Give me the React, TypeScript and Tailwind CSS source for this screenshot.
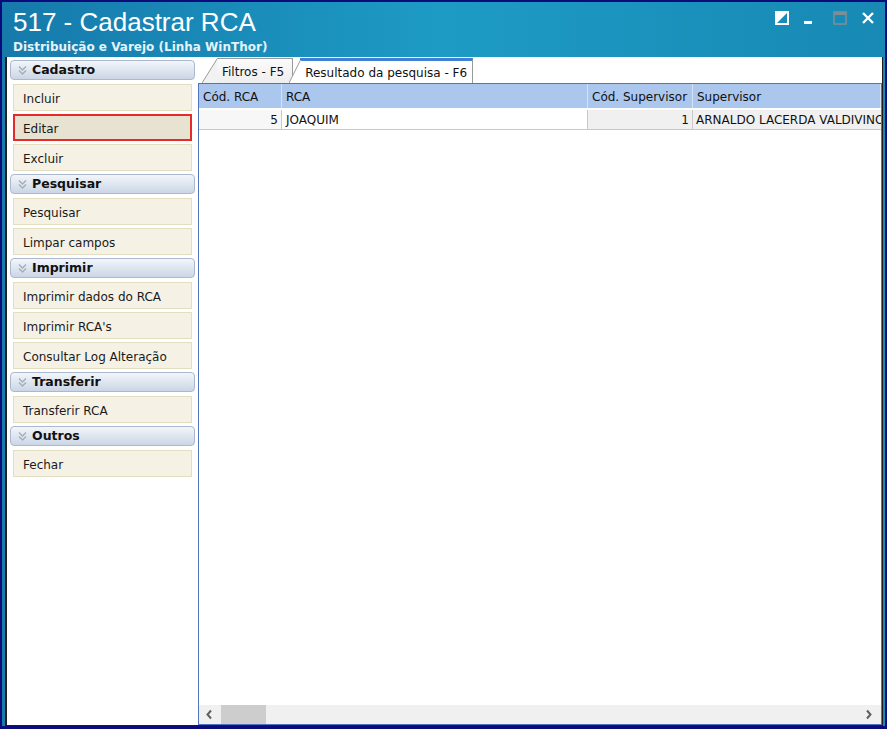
import type { ReactNode } from "react";

const uiFont = "font-['DejaVu_Sans',Verdana,sans-serif]";

type SideGroup = { title: string; items: string[] };

const groups: SideGroup[] = [
  { title: "Cadastro", items: ["Incluir", "Editar", "Excluir"] },
  { title: "Pesquisar", items: ["Pesquisar", "Limpar campos"] },
  { title: "Imprimir", items: ["Imprimir dados do RCA", "Imprimir RCA's", "Consultar Log Alteração"] },
  { title: "Transferir", items: ["Transferir RCA"] },
  { title: "Outros", items: ["Fechar"] },
];

function DoubleChevron() {
  return (
    <svg width="11" height="11" viewBox="0 0 11 11" className="shrink-0" aria-hidden>
      <path d="M2 1.5 L5.5 5 L9 1.5 M2 5.5 L5.5 9 L9 5.5" fill="none" stroke="#a3acbb" strokeWidth="1.3" />
    </svg>
  );
}

function GroupHeader({ title }: { title: string }) {
  return (
    <div className="flex h-[20px] w-[185px] items-center gap-[4px] rounded-[4px] border border-[#aab9cf] bg-gradient-to-b from-[#f3f6fa] to-[#cbd6e5] pl-[6px]">
      <DoubleChevron />
      <span className="pt-[1px] text-[12.5px] font-bold text-[#111]">{title}</span>
    </div>
  );
}

function SideButton({ label, selected }: { label: string; selected?: boolean }) {
  const tone = selected
    ? "border-2 border-[#e52a2a] bg-[#e7e3d0] pl-[8px]"
    : "border border-[#e3ddc2] bg-[#f5f2e5] pl-[9px]";
  return (
    <div className={`ml-[3px] flex h-[27px] w-[179px] items-center pt-[2px] text-[12px] text-[#1a1a1a] ${tone}`}>
      {label}
    </div>
  );
}

function Sidebar() {
  return (
    <aside className="flex w-[191px] shrink-0 flex-col pl-[3px] pt-[3px]">
      {groups.map((g) => (
        <div key={g.title} className="mb-[3px] flex flex-col">
          <GroupHeader title={g.title} />
          <div className="mt-[4px] flex flex-col gap-[3px]">
            {g.items.map((it) => (
              <SideButton key={it} label={it} selected={it === "Editar"} />
            ))}
          </div>
        </div>
      ))}
    </aside>
  );
}

function Tab({ children, active, slant }: { children: ReactNode; active?: boolean; slant: number }) {
  const fill = active ? "#ffffff" : "#f2f2f2";
  return (
    <div className={`flex h-[25px] items-end ${active ? "z-10 -ml-[4px]" : ""}`}>
      <svg width={slant} height="25" viewBox={`0 0 ${slant} 25`} className="shrink-0" aria-hidden>
        <polygon points={`0,25 ${slant},1 ${slant},25`} fill={fill} />
        <line x1="0" y1="25" x2={slant} y2="1" stroke="#9a9a9a" strokeWidth="1" />
        {active && <line x1={slant - 1} y1="1" x2={slant} y2="1" stroke="#3a78d4" strokeWidth="2" />}
      </svg>
      <div
        className={`flex h-[25px] items-center border-r border-[#9a9a9a] pt-[2px] text-[12px] text-[#111] ${
          active
            ? "border-t-[3px] border-t-[#3f7fd6] bg-white pl-[4px] pr-[5px]"
            : "border-t border-t-[#9a9a9a] bg-gradient-to-b from-[#fbfbfb] to-[#eeeeee] pl-[5px] pr-[8px]"
        }`}
      >
        {children}
      </div>
    </div>
  );
}

const cols = [
  { label: "Cód. RCA", w: "w-[83px]" },
  { label: "RCA", w: "w-[306px]" },
  { label: "Cód. Supervisor", w: "w-[105px]" },
  { label: "Supervisor", w: "flex-1" },
];

function Grid() {
  return (
    <div className="flex min-h-0 flex-1 flex-col border border-[#5273bd] bg-white">
      <div className="flex h-[24px] shrink-0 bg-[#abc7ee] text-[12px] text-[#111]">
        {cols.map((c) => (
          <div key={c.label} className={`${c.w} flex items-center overflow-hidden whitespace-nowrap border-r border-[#d5e2f6] pl-[4px] pt-[2px]`}>
            {c.label}
          </div>
        ))}
      </div>
      <div className="flex h-[22px] shrink-0 border-b border-[#c9c9c9] pt-[2px] text-[12px] text-[#111]">
        <div className="flex w-[83px] items-center justify-end border-r border-[#c9c9c9] bg-[#f7f7f7] pr-[3px]">5</div>
        <div className="flex w-[306px] items-center border-r border-[#c9c9c9] pl-[4px]">JOAQUIM</div>
        <div className="flex w-[105px] items-center justify-end border-r border-[#c9c9c9] bg-[#f0f0f0] pr-[3px]">1</div>
        <div className="flex flex-1 items-center overflow-hidden whitespace-nowrap bg-[#f0f0f0] pl-[3px]">
          ARNALDO LACERDA VALDIVINO
        </div>
      </div>
      <div className="flex-1" />
      <div className="flex h-[19px] shrink-0 items-center bg-[#f0f0f0]">
        <svg width="22" height="19" viewBox="0 0 22 19" className="shrink-0" aria-hidden>
          <path d="M12 5.5 L8.5 9.5 L12 13.5" fill="none" stroke="#606060" strokeWidth="2" />
        </svg>
        <div className="h-[19px] w-[45px] bg-[#cdcdcd]" />
        <div className="flex-1" />
        <svg width="20" height="19" viewBox="0 0 20 19" className="shrink-0" aria-hidden>
          <path d="M6 5.5 L9.5 9.5 L6 13.5" fill="none" stroke="#606060" strokeWidth="2" />
        </svg>
      </div>
    </div>
  );
}

function WindowControls() {
  return (
    <div className="flex items-center pt-[9px]">
      <svg width="14" height="14" viewBox="0 0 14 14" className="mr-[14px]" aria-hidden>
        <rect x="1" y="1" width="12" height="12" fill="none" stroke="#fff" strokeWidth="2" />
        <polygon points="1,1 13,1 1,13" fill="#fff" />
      </svg>
      <svg width="10" height="14" viewBox="0 0 10 14" className="mr-[20px]" aria-hidden>
        <rect x="1" y="10" width="8" height="3" fill="#fff" />
      </svg>
      <svg width="14" height="14" viewBox="0 0 14 14" className="mr-[14px]" aria-hidden>
        <rect x="1" y="1" width="12" height="12" fill="none" stroke="#7d8e95" strokeWidth="1.6" />
        <rect x="1" y="1" width="12" height="3" fill="#7d8e95" />
      </svg>
      <svg width="14" height="14" viewBox="0 0 14 14" className="mr-[8px]" aria-hidden>
        <path d="M2 2 L12 12 M12 2 L2 12" stroke="#fff" strokeWidth="2.4" />
      </svg>
    </div>
  );
}

export default function App() {
  return (
    <div className={`h-[729px] w-[887px] overflow-hidden bg-[#0b0b7c] px-[2px] pb-[3px] pt-[2px] ${uiFont}`}>
      <div className="flex h-full flex-col bg-gradient-to-r from-[#167aab] via-[#1d9bc5] to-[#1789b4] pl-[3px] pr-[2px]">
        <header className="flex h-[55px] shrink-0 flex-col">
          <div className="flex flex-1">
            <div className="flex flex-col pl-[8px]">
              <h1 className="mt-[4px] font-['Liberation_Sans',Arial,sans-serif] text-[26px] leading-[32px] text-white">
                517 - Cadastrar RCA
              </h1>
              <p className="mt-[1px] font-['DejaVu_Sans',sans-serif] text-[12px] font-bold leading-[16px] text-[#e4f3f8]">
                Distribuição e Varejo (Linha WinThor)
              </p>
            </div>
            <div className="ml-auto">
              <WindowControls />
            </div>
          </div>
          <div className="ml-auto mb-[2px] h-[2px] w-[408px] bg-[#f2a43a]" />
        </header>
        <main className="flex min-h-0 flex-1 border-b border-l-2 border-r border-[#1e1e1e] bg-white">
          <Sidebar />
          <section className="flex min-w-0 flex-1 flex-col">
            <div className="flex h-[26px] shrink-0 items-end pl-[4px]">
              <Tab slant={15}>Filtros - F5</Tab>
              <Tab slant={12} active>
                Resultado da pesquisa - F6
              </Tab>
            </div>
            <Grid />
          </section>
        </main>
      </div>
    </div>
  );
}
